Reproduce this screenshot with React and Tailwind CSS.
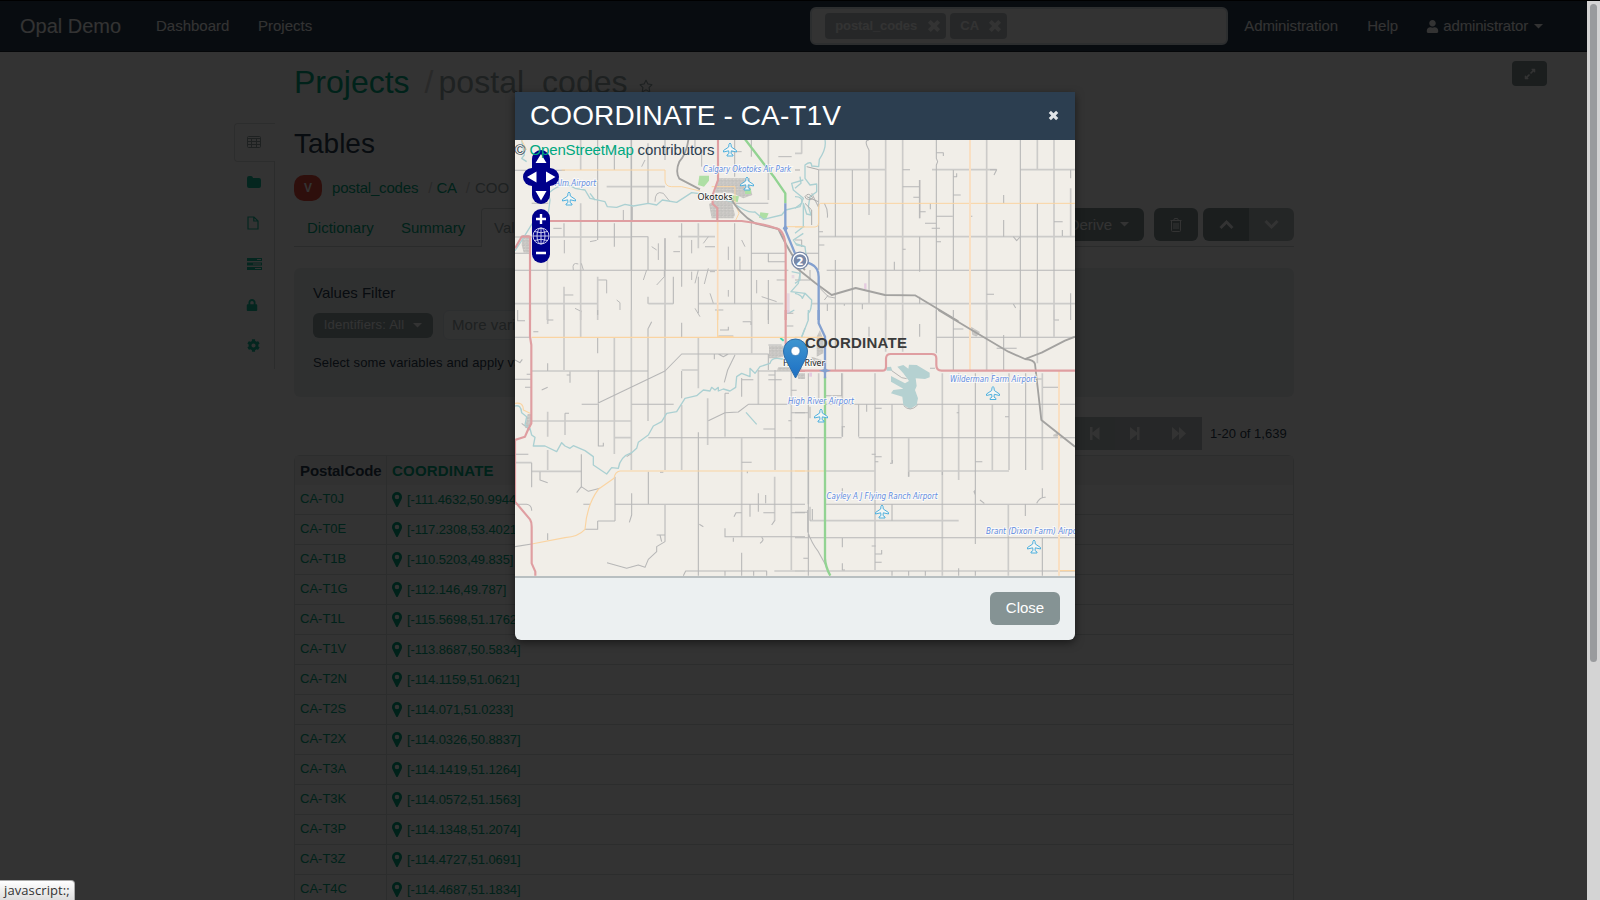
import React from "react";
import { FaLock, FaCog, FaUser, FaTimes, FaExpandAlt, FaRegStar, FaChevronUp, FaChevronDown } from "react-icons/fa";

const rows = [
  ["CA-T0J", "[-111.4632,50.9944]"],
  ["CA-T0E", "[-117.2308,53.4021]"],
  ["CA-T1B", "[-110.5203,49.835]"],
  ["CA-T1G", "[-112.146,49.787]"],
  ["CA-T1L", "[-115.5698,51.1762]"],
  ["CA-T1V", "[-113.8687,50.5834]"],
  ["CA-T2N", "[-114.1159,51.0621]"],
  ["CA-T2S", "[-114.071,51.0233]"],
  ["CA-T2X", "[-114.0326,50.8837]"],
  ["CA-T3A", "[-114.1419,51.1264]"],
  ["CA-T3K", "[-114.0572,51.1563]"],
  ["CA-T3P", "[-114.1348,51.2074]"],
  ["CA-T3Z", "[-114.4727,51.0691]"],
  ["CA-T4C", "[-114.4687,51.1834]"],
];

const Caret = ({ className = "" }) => (
  <svg className={`shrink-0 ${className}`} width="9" height="5" viewBox="0 0 9 5"><path d="M0 0H9L4.500 4.500Z" fill="currentColor" /></svg>
);

const PinIcon = () => (
  <svg width="10" height="15" viewBox="0 0 10 15" className="shrink-0">
    <path fillRule="evenodd" fill="currentColor" d="M5 0A5 5 0 0 0 0 5C0 6 .2 6.700 .5 7.300L4.100 14.400C4.500 15.100 5.500 15.100 5.900 14.400L9.500 7.300C9.800 6.700 10 6 10 5A5 5 0 0 0 5 0ZM5 2.700A2.300 2.300 0 1 1 5 7.300A2.300 2.300 0 0 1 5 2.700Z" />
  </svg>
);

const CrossIcon = ({ size }) => (
  <svg width={size} height={size} viewBox="0 0 12 12" className="shrink-0"><path d="M2 2L10 10M10 2L2 10" stroke="currentColor" strokeWidth="3.400" /></svg>
);

const TableIcon = () => (
  <svg width="14" height="12" viewBox="0 0 14 12" fill="none" stroke="currentColor">
    <rect x=".5" y=".5" width="13" height="11" rx="1" />
    <path d="M.5 2.500H13.500M.5 5.500H13.500M.5 8.500H13.500M4.500 2V12M9.500 2V12" />
  </svg>
);
const FolderIcon = () => (
  <svg width="14" height="12" viewBox="0 0 14 12"><path fill="currentColor" d="M0 2Q0 0 2 0H4Q5.800 0 6 2H12Q14 2 14 4V10Q14 12 12 12H2Q0 12 0 10Z" /></svg>
);
const FileIcon = () => (
  <svg width="12" height="14" viewBox="0 0 12 14" fill="none" stroke="currentColor" strokeWidth="1.2"><path d="M1 1H7L11 5V13H1ZM6.800 1V5H11" /></svg>
);
const TasksIcon = () => (
  <svg width="16" height="12" viewBox="0 0 16 12"><path fill="currentColor" fillRule="evenodd" d="M0 0H15V3H0ZM10 1V2H14V1ZM0 4.500H15V7.500H0ZM6 5.500V6.500H14V5.500ZM0 9H15V12H0ZM8 10V11H14V10Z" /></svg>
);
const TrashIcon = () => (
  <svg width="12" height="14" viewBox="0 0 12 14" fill="none" stroke="currentColor"><path d="M.5 2.500H11.500M3.500 2.500L4.500 .5H7.500L8.500 2.500M1.500 2.500V12.500Q1.500 13.500 2.500 13.500H9.500Q10.500 13.500 10.500 12.500V2.500M4 5V11M6 5V11M8 5V11" /></svg>
);

function Navbar() {
  return (
    <header className="flex h-[52px] items-center border-b border-[#1a242f] border-t border-t-black bg-[#2c3e50] text-[15px] leading-5 text-white">
      <span className="ml-5 w-[136px] text-xl leading-6">Opal Demo</span>
      <span className="w-[102px]">Dashboard</span>
      <span>Projects</span>
      <div className="ml-auto flex h-[38px] w-[418px] items-center gap-1 rounded-md border-2 border-[#dce4ec] bg-white pl-[13px] text-[13px] font-bold text-white">
        <span className="flex h-[26px] w-[121px] items-center justify-between rounded-sm bg-[#bdc3c7] pl-[10px] pr-[5px]">
          <span className="tracking-[-0.1px]">postal_codes</span><CrossIcon size={14} />
        </span>
        <span className="flex h-[26px] w-[57px] items-center justify-between rounded-sm bg-[#bdc3c7] pl-[10px] pr-[5px]">
          CA<CrossIcon size={14} />
        </span>
      </div>
      <span className="ml-4 w-[123px] tracking-[-0.1px]">Administration</span>
      <span className="w-[59px]">Help</span>
      <FaUser size={13} className="mr-1" />
      <span className="tracking-[-0.15px]">administrator</span>
      <Caret className="ml-[6px] mr-[44px]" />
    </header>
  );
}

function Sidebar() {
  return (
    <nav className="mt-[71px] flex h-[246px] w-[41px] flex-col text-[#18bc9c]">
      <div className="flex h-[39px] shrink-0 items-center rounded-l border border-r-0 border-[#dce0e0] pb-px pl-3 text-[#95a5a6]"><TableIcon /></div>
      <div className="-mt-px flex flex-1 flex-col border-r border-[#d5dadb] pl-[13px]">
        <div className="flex h-[41px] items-center"><FolderIcon /></div>
        <div className="flex h-[41px] items-center"><FileIcon /></div>
        <div className="flex h-[41px] items-center"><TasksIcon /></div>
        <div className="flex h-[41px] items-center"><FaLock size={12} className="-ml-px" /></div>
        <div className="flex h-[41px] items-center"><FaCog size={13} /></div>
      </div>
    </nav>
  );
}

function Main() {
  return (
    <main className="ml-[19px] w-[1000px] text-[15px] leading-5 text-[#2c3e50]">
      <h1 className="mt-[10px] flex h-10 items-center text-[32px] leading-10">
        <span className="text-[#00a880]">Projects</span>
        <span className="ml-[15px] text-[#ccc]">/</span>
        <span className="ml-[5px] tracking-[0.05px] text-[#95a5a6]">postal_codes</span>
        <FaRegStar size={14} className="ml-[11px] mt-2 text-[#95a5a6]" />
      </h1>
      <h2 className="mt-[22px] h-10 text-[28px] leading-10">Tables</h2>
      <div className="mt-[9px] flex h-[30px] items-center text-[#00a880]">
        <span className="flex h-[26px] w-7 items-center justify-center rounded-[10px] bg-[#e74c3c] text-[12px] font-bold text-white">V</span>
        <span className="ml-[10px] tracking-[-0.18px]">postal_codes</span>
        <span className="ml-[10px] text-[#ccc]">/</span>
        <span className="ml-1 tracking-[-0.2px]">CA</span>
        <span className="ml-[9px] text-[#ccc]">/</span>
        <span className="ml-[5px] w-[34px] overflow-hidden text-[#95a5a6]">COORDINATE</span>
      </div>
      <div className="mt-[5px] flex h-[39px] text-[#00a880]">
        <span className="w-[94px] border-b border-[#d0d6d8] pl-[13px] pt-[10px]">Dictionary</span>
        <span className="w-[93px] border-b border-[#d0d6d8] pl-[13px] pt-[10px]">Summary</span>
        <span className="w-[74px] rounded-t border border-b-0 border-[#d0d6d8] pl-3 pt-[9px] text-[#95a5a6]">Values</span>
        <div className="flex flex-1 items-start justify-end border-b border-[#d0d6d8] text-white">
          <span className="flex h-[33px] w-[96px] items-center justify-end rounded-md bg-[#859596] pr-[15px]">Derive<Caret className="ml-2" /></span>
          <span className="ml-[10px] flex h-[33px] w-11 items-center justify-center rounded-md bg-[#859596]"><TrashIcon /></span>
          <span className="ml-[5px] flex h-[33px] w-[46px] items-center justify-center rounded-l-md bg-[#859596]"><FaChevronUp size={15} stroke="currentColor" strokeWidth="24" /></span>
          <span className="flex h-[33px] w-[45px] items-center justify-center rounded-r-md bg-[#b6bfbf]"><FaChevronDown size={15} stroke="currentColor" strokeWidth="24" /></span>
        </div>
      </div>
      <section className="mt-[21px] h-[129px] rounded-md bg-[#ecf0f1] px-[19px] pt-[15px]">
        <div>Values Filter</div>
        <div className="mt-[7px] flex items-center">
          <span className="flex h-[25px] w-[120px] items-center justify-center gap-[9px] rounded-md bg-[#95a5a6] text-[13px] tracking-[0.2px] text-white">Identifiers: All<Caret /></span>
          <span className="ml-[10px] flex h-[30px] w-[220px] items-center rounded-md border border-[#dce4ec] bg-[#f5f7f7] pl-2 tracking-[0.1px] text-[#95a5a6]">More variables...</span>
        </div>
        <p className="mt-[13px] text-[13px] tracking-[0.12px]">Select some variables and apply values filters</p>
      </section>
      <div className="mt-5 flex h-[33px] items-center justify-end text-[13px]">
        <div className="flex h-[33px] w-[170px] items-center bg-[#b9c1c1] pl-[42px] text-white">
          <span className="flex h-full w-[41px] items-center justify-center"><svg width="10" height="13" viewBox="0 0 10 13"><path fill="currentColor" d="M0 0H2.500V5.500L9.500 0V13L2.500 7.500V13H0Z" /></svg></span>
          <span className="flex h-full w-[87px] items-center justify-between bg-[#bdc3c7] pl-[15px] pr-[16px]">
            <svg width="10" height="13" viewBox="0 0 10 13"><path fill="currentColor" d="M0 0L7 5.500V0H9.500V13H7V7.500L0 13Z" /></svg>
            <svg width="14" height="13" viewBox="0 0 14 13"><path fill="currentColor" d="M0 0L7 6V0L14 6.500L7 13V7L0 13Z" /></svg>
          </span>
        </div>
        <span className="w-[92px] pl-[8px]">1-20 of 1,639</span>
      </div>
      <div className="mt-[5px] rounded-t-md border border-[#dce0e0] text-[13px] text-[#00a880]">
        <div className="flex h-[29px] bg-[#f5f5f5] text-[15px] font-bold">
          <span className="w-[92px] border-r border-[#dce0e0] pl-[5px] pt-[5px] tracking-[-0.1px] text-[#2c3e50]">PostalCode</span>
          <span className="pl-[5px] pt-[5px] tracking-[0.2px]">COORDINATE</span>
        </div>
        {rows.map(([code, coord], i) => (
          <div key={code} className={i % 2 ? "flex h-[30px] border-b border-[#dce0e0]" : "flex h-[30px] border-b border-[#dce0e0] bg-[#fcfcfc]"}>
            <span className="w-[92px] border-r border-[#dce0e0] pl-[5px] pt-1">{code}</span>
            <span className="flex items-center pl-[5px]"><PinIcon /><span className="ml-[5px] tracking-[-0.1px]">{coord}</span></span>
          </div>
        ))}
      </div>
    </main>
  );
}

const Plane = ({ x, y }) => (
  <path transform={`translate(${x} ${y})`} fill="#f4f6f4" stroke="#4fb0de" strokeWidth="1" strokeLinejoin="round"
    d="M0 -6.500Q1.300 -6 1.300 -2.500L6.500 1V2.500L1.300 1.300L1 4L3 5.500V6.500H-3V5.500L-1 4L-1.300 1.300L-6.500 2.500V1L-1.300 -2.500Q-1.300 -6 0 -6.500Z" />
);

const Label = ({ x, y, w, children, dark }) => (
  <text x={x} y={y} textLength={w} lengthAdjust="spacingAndGlyphs" fontFamily={dark ? "'Noto Sans', sans-serif" : "'DejaVu Sans', sans-serif"} fontSize={dark ? 9.5 : 8}
    fontStyle={dark ? "normal" : "italic"} fill={dark ? "#222" : "#5f8be0"} stroke="#fff" strokeOpacity=".7" strokeWidth="2" paintOrder="stroke">{children}</text>
);

function MapView() {
  return (
    <svg width="560" height="436" viewBox="515 140 560 436" className="block">
      <defs>
        <linearGradient id="pin" x1="0" y1="0" x2="0" y2="1"><stop offset="0" stopColor="#3f96d0" /><stop offset="1" stopColor="#1c6fc4" /></linearGradient>
        <pattern id="town" width="11" height="10" patternUnits="userSpaceOnUse"><rect width="11" height="10" fill="#dedbd6" /><path d="M0 2H11M3 0V10M0 7L5 6L11 8M8 2V6" fill="none" stroke="#b9b8b6" strokeWidth="2.200" /></pattern>
      </defs>
      <rect x="515" y="140" width="560" height="436" fill="#f1eee8" />

      {/* north-west */}
      <g transform="translate(515 80) scale(.33333)" fill="none" strokeLinejoin="round">
        <path stroke="#cccbc9" strokeWidth="5" d="M97 470V720M147 620V720M197 180V270M197 370V720M349 180V570M450 475V720M550 430V505M248 590V720M760 180V360M0 671H248M400 671H475M550 671H805M275 320H450M0 471H350M490 470H600" />
        <path stroke="#b7b7b7" strokeWidth="3.200" d="M248 180V480M298 200V270M298 430V500M349 180V720M399 190V370M399 470V570M399 650V671M475 590V671M500 430V620M450 475V571M550 590V700M659 430V671M709 425V720M760 520V545H810M760 600V720M0 571H820M0 271H150M50 370H100M600 370H760M710 520H810M147 430V470M0 520H45M350 470H400M659 180V290M709 180V230M600 500H570M450 180V240" />
        <path stroke="#b5b5b5" strokeWidth="2.800" d="M115 445H140M148 480V520M225 485L245 481M175 570Q170 545 190 552M199 550L205 570M250 600H275V640M148 645H175M305 660L315 668V690M325 390V422M352 380V422M410 500L425 510M430 490V540M395 570L385 600M425 615L448 590V572M475 515H495M530 480V520M565 490L580 470M530 575V600M550 570L540 610M580 565L568 612M600 575H585M640 500V540M675 530V570M380 260L390 240M420 365Q420 330 445 340L465 365M585 640L595 670M680 480L690 500M725 600V640M740 650L785 665M180 685L200 695M540 685L555 710M600 690H625M640 650V630M540 180V210M560 210V260M785 600H810M790 230H830M640 215H680" />
        <path stroke="#e0c9dc" strokeWidth="8" d="M820 640V700M834 585V595" opacity=".6" />
        <path stroke="none" fill="url(#town)" d="M607 295H705V318L712 345L685 355L650 338H600ZM582 372L600 362H650L660 405L655 415H590ZM22 465H44V518H26L20 495Z" />
        <path stroke="none" fill="#aedfa4" d="M553 287H582V302L567 320L549 315ZM645 345L672 349L668 367L650 361ZM736 397L761 400L753 418L732 413ZM690 325H708V342H690Z" />
        <path stroke="#abd0d2" strokeWidth="4" d="M20 180L28 225L20 235L35 245M0 512L20 482L52 430L100 400L105 360L100 340Q145 300 180 325L210 330L225 355L270 365L277 380L305 382L330 373L355 378L400 370L425 375L442 360L485 367L530 338L570 343L650 365Q695 400 720 396L745 418L800 405L812 390L855 380L865 355L835 330L830 310L865 300M225 340L240 360M865 460L835 480L845 495L870 500M830 575L855 580L850 610L828 635L870 640M820 700L838 690" />
        <path stroke="#fad4a2" strokeWidth="3" d="M140 270H450V300Q450 320 470 320H500L555 333M590 320H660V370L672 400L660 425M815 440H870M20 180L35 210" />
        <path stroke="#f9dabb" strokeWidth="5" d="M608 425V720" />
        <path stroke="#a3a2a0" strokeWidth="5.500" d="M520 180Q515 220 493 245Q480 275 493 296L555 328M645 350Q670 400 720 430L790 447Q820 510 845 545L870 570" />
        <path stroke="#df9ea1" strokeWidth="6.500" d="M45 720V470H20L0 505M100 423H680Q750 432 790 447Q812 460 812 510V720M609 180V300L593 345V372L607 384V422" />
        <path stroke="#92d392" strokeWidth="7" d="M688 175L780 295L811 340V370" />
        <path stroke="#83a0cf" strokeWidth="7" d="M811 370V450L840 520L870 545" />
        <path fill="#83a0cf" d="M803 445L811 434L819 445L811 456Z" />
      </g>

      {/* north-east */}
      <g transform="translate(795 80) scale(.33333)" fill="none" strokeLinejoin="round">
        <path stroke="#cccbc9" strokeWidth="5" d="M222 210V405M272 180V720M323 180V720M575 180V720M727 180V270M777 180V720M827 325V470M71 269H272M411 269H605M676 269H840M71 470H840M50 671H840M20 180V220H0M222 570V670M374 300V415" />
        <path stroke="#b7b7b7" strokeWidth="3.200" d="M121 180V470M121 540V720M172 270V720M374 300V415M374 470V575M374 650V671M424 180V235L428 245L424 255V720M475 270V570M626 345V370M626 420V470M676 180V720M727 370V720M827 270V295M827 640V720M71 269V570M323 269H345M121 571H840M323 320H374M374 395H392M424 409H473M424 218H445V228M475 290H485V280M475 345H497M222 210Q205 180 222 180M406 370V388M390 430H424M410 445H435M424 485H438M298 545V570M585 269H605L597 285M655 470L665 482L675 471M727 540V577M777 425H803M802 450V468M575 643H597M655 672L662 684M202 672V688M97 672V693M88 370Q100 390 97 413M71 495H88M0 520H71M121 571H95M71 455H84M323 508H332M525 409H532M45 570V600H0M148 672V677M50 340L70 380M0 480H20V500M355 352H375" />
        <path stroke="#abd0d2" strokeWidth="4" d="M90 180Q95 205 73 238L71 260L50 258Q50 240 30 255L30 295L45 315L65 312L65 335L45 350L40 380L48 405L35 402L25 370V440L0 460M0 325L18 310L15 290M0 350Q25 350 20 370L0 385M0 490L30 500L35 540L15 560V600L0 610M0 640Q20 645 22 655L30 640L50 660Q50 690 40 700V720" />
        <path stroke="#aaa" strokeWidth="3" d="M30 350Q40 335 52 352Q52 362 40 358Q32 358 30 350M35 350L70 365M30 370L50 390V435M0 270H15M35 260L71 269" />
        <path stroke="#fad4a2" strokeWidth="3" d="M840 370H76Q71 372 71 385V430Q71 441 60 441H0" />
        <path stroke="#f9dfc2" strokeWidth="6" d="M525 180V720" />
        <path stroke="#a3a2a0" strokeWidth="5.500" d="M0 560L60 608L110 645L182 624L270 645L360 646L490 724" />
        <path stroke="#aaa" strokeWidth="2.500" d="M75 625L100 650L120 654M100 645L88 660" />
        <path stroke="#83a0cf" strokeWidth="7" d="M0 530L50 553Q71 563 71 590V720" />
        <path stroke="#e5cbe0" strokeWidth="7" d="M211 610V627" />
      </g>

      {/* south-west */}
      <g transform="translate(515 310) scale(.33333)" fill="none" strokeLinejoin="round">
        <path stroke="#cccbc9" strokeWidth="5" d="M147 0V180M197 0V82M349 0V480M450 0V480M98 0V42M298 82V432M500 180H550M500 285V480M50 333H350M300 383H350M98 305V380M98 420V480M150 375V310M300 500V633M450 585V695M578 265V405M730 180V283M780 180V480M829 180V780M50 484H200M710 0V130M630 250V380M680 385V680M550 82V235M0 458H50M779 500V633M778 783H870" />
        <path stroke="#b7b7b7" strokeWidth="3.200" d="M248 0V15M248 82V130M500 38V82M760 0V42M399 55V333M50 183H400M0 82H45M250 180V408H265V398M200 283H248M350 283H476M248 280L450 183L500 132H760V180M500 183V265M730 183H870M700 283H829M580 332L630 308L670 306L700 283M630 250H642M628 217L638 180L660 135M598 132V148M610 132L625 140L640 132M400 383H870M400 485V583M300 583H870M550 367V797M248 633H300M248 633V658H210M199 433V530L220 544L255 535M199 530L185 548M0 208H50M50 458V532M75 485V510L98 518M0 433H40M0 583H35Q50 585 50 602M205 583H225M98 160V183M98 670V690M680 204V260M680 209H715M760 209H800M829 241H845M745 357H780M680 457H710M820 332H829M829 308H870M760 105H800M705 583V620M730 550V605M752 555V580M829 608H870M745 608H779M657 620L663 608H680M630 655V680H870M680 797V728M505 797L512 783H755V797M630 783V797M716 783V797M779 632L770 645M425 675H450M276 758L335 775L370 765L390 772L400 748L425 725V710L450 695M435 675L440 695M0 710L50 702M343 637L350 615V550M8 0V32H30M98 30H115M55 65H70M80 240L98 232M165 185V218M165 195H155M150 310H162M400 55L410 35M683 35H708V45M615 60H640V50M610 78H655M553 643L565 650M735 700Q750 690 740 682M655 683V695M20 340L45 360M0 150L15 158L22 148M35 193H50M30 232H48M335 440L350 430M435 487H445M697 484V490M850 195L870 203M815 10H835M815 48H835M760 195H780" />
        <path stroke="none" fill="url(#town)" d="M762 107H805V140L780 145H762ZM790 172H860V182H785ZM845 190H870V207H850ZM38 312H48V345L30 355Z" />
        <path stroke="#e0c9dc" strokeWidth="8" d="M820 0V10" opacity=".6" />
        <path stroke="#40d6b0" strokeWidth="6" d="M796 84L806 92" />
        <path stroke="#abd0d2" strokeWidth="4" d="M0 288Q18 283 20 308L35 320L30 345L45 355L50 375L60 382L55 408H90L125 425L140 398L150 408L165 415L175 407L210 422L235 440V465L275 492L290 473L310 475Q315 440 350 428L365 415L370 397L400 375L415 348L440 335L455 310L485 305L510 265L545 257L565 240L585 243L590 232L600 240L610 232V243L625 237L645 243L662 232L665 200L680 190L705 200V175L720 190L735 170L765 160Q770 140 800 147L850 145M693 307L725 343M870 55L860 80" />
        <path stroke="#fad4a2" strokeWidth="3.500" d="M50 82H870M608 0V80H655M0 280Q25 275 25 300L45 310M870 483H315Q300 485 297 505L250 538Q215 585 210 658Q190 680 150 683L50 702" />
        <path stroke="#df9ea1" strokeWidth="6.500" d="M45 0V80L49 105V340Q40 355 30 380L0 390V575L45 628Q50 635 50 650V760L61 785V797M812 0V110M850 183H870" />
      </g>

      {/* south-east */}
      <g transform="translate(795 310) scale(.33333)" fill="none" strokeLinejoin="round">
        <path stroke="#cccbc9" strokeWidth="5" d="M272 0V125M323 0V125M442 190V797M291 283V458M341 385V500M592 283V480M592 190V210M491 283V510M491 190V210M642 190V480M575 0V180M777 0V80M727 0V160M240 190V780M71 190V280M742 190V480M640 585V797M45 632H491M0 783H840M142 190V380M40 383V583M90 483H240M341 483H642" />
        <path stroke="#b7b7b7" strokeWidth="3.200" d="M121 0V180M172 0V180M222 50V80M374 42V80M424 0V130M475 0V180M626 75V180M676 0V80M541 190V702M692 190V480M40 190V383M40 283V797M191 283V380M142 535V555M142 683V712M142 760V780H150M291 583V632M691 583V618M742 683V797M341 783V797M391 783V797M491 775V797M541 783V797M291 783V797M424 82H840M90 283H840M0 383H140M191 383H840M90 583H840M0 683H840M90 257H140V190M744 232H790M475 57H505M605 115H665M778 30H792M215 283V305M240 295H260M140 350H150M142 350V380M230 433H242M240 440H260M240 455H250M285 460H292V450M341 500V485M541 455H562M442 485V495M541 540L537 545L541 555M555 570L568 580M725 580Q735 560 752 562M742 535V565M230 708H242M240 732H260V720M240 757H260M45 590V632M52 597V630M38 600V665Q50 700 70 725L95 770M25 745H40M0 607H40M0 308H40M45 290V325M485 308H492M630 320H642M720 207H740M405 175H420M715 683H725" />
        <path stroke="none" fill="#b5d1d1" d="M274 172L288 170L292 182H275ZM307 170L325 165L340 176L342 164L365 165L404 188V202L390 207L362 205L365 228L360 240L369 265L365 285L345 297L325 285L322 260L288 250L295 240L325 236L288 215V198L330 220L342 213L325 190Z" />
        <path stroke="#aaa" strokeWidth="2.500" d="M290 182L320 203L335 206M326 287Q345 308 368 285" />
        <path stroke="none" fill="url(#town)" d="M528 50L555 66L545 80L532 75ZM775 374L792 366V380H775ZM50 140L80 150V172L50 160ZM65 80L75 60L85 90V130L65 140Z" />
        <path stroke="#fad4a2" strokeWidth="3.500" d="M0 82H85M0 483H88M792 782H840" />
        <path stroke="#f9dfc2" strokeWidth="6" d="M525 0V180M792 183V797" />
        <path stroke="#abd0d2" strokeWidth="4" d="M40 0V30L20 82" />
        <path stroke="#a3a2a0" strokeWidth="5.500" d="M430 0L530 60L640 125L690 147Q718 150 720 162L730 250L739 330L840 410M690 147L740 128L810 92L840 80" />
        <path stroke="#df9ea1" strokeWidth="6.500" d="M0 182H262Q273 182 273 170V145Q274 132 287 132H410Q424 132 424 145V165Q424 182 440 182H840" />
        <path stroke="#92d392" strokeWidth="7" d="M90 200V745Q91 770 106 797" />
        <path stroke="#83a0cf" strokeWidth="7" d="M71 0V40L90 80V205" />
        <path fill="#83a0cf" d="M72 182L86 178L90 164L94 178L108 182L94 186L90 200L86 186Z" />
        <path stroke="#e5cbe0" strokeWidth="8" d="M47 188V200" />
      </g>

      <Plane x={569} y={198.500} /><Plane x={730} y={149.500} /><Plane x={747} y={183.500} />
      <Plane x={821} y={415.500} /><Plane x={993} y={393} /><Plane x={882} y={511.500} /><Plane x={1034} y={546.500} />
      <Label x={555} y={186} w={41}>Alm Airport</Label>
      <Label x={703} y={171.500} w={88}>Calgary Okotoks Air Park</Label>
      <Label x={788} y={403.500} w={66}>High River Airport</Label>
      <Label x={950} y={381.500} w={86}>Wilderman Farm Airport</Label>
      <Label x={826.500} y={499} w={111}>Cayley A J Flying Ranch Airport</Label>
      <Label x={986} y={534} w={97}>Brant (Dixon Farm) Airport</Label>
      <Label dark x={697.500} y={200} w={35}>Okotoks</Label>
      <Label dark x={783} y={365.500} w={42}>High River</Label>

      <circle cx="800" cy="260.500" r="9" fill="#7788a8" />
      <circle cx="800" cy="260.500" r="7" fill="none" stroke="#fff" strokeWidth="1.300" />
      <text x="800" y="264.500" textAnchor="middle" fontFamily="'DejaVu Sans', sans-serif" fontWeight="bold" fontSize="10.500" fill="#fff">2</text>

      <path d="M795.500 378L785 358Q783.500 354.500 783.500 351A12 12 0 0 1 807.500 351Q807.500 354.500 806 358Z" fill="url(#pin)" stroke="#2d6da8" strokeWidth="1" />
      <circle cx="795.500" cy="351" r="4.500" fill="#fff" stroke="#2d6da8" strokeWidth=".6" />
      <text x="805" y="348" textLength="102" fontFamily="'Liberation Sans', sans-serif" fontWeight="bold" fontSize="15" fill="#3b3b3b">COORDINATE</text>

      <g fill="#00008b">
        <rect x="532" y="150" width="18" height="54" rx="9" />
        <rect x="523" y="168" width="36" height="18" rx="9" />
        <rect x="532" y="209" width="18" height="54" rx="9" />
      </g>
      <path fill="#fff" d="M541 154L546.500 163H535.500ZM541 200.500L546.500 191H535.500ZM527 177L536.500 171.500V182.500ZM555.500 177L546 171.500V182.500ZM536 217.800H539.800V214H542.200V217.800H546V220.200H542.200V224H539.800V220.200H536ZM536 251.800H546V254.200H536Z" />
      <g fill="none" stroke="#dcdcf5" strokeWidth=".9">
        <circle cx="541" cy="236" r="8" /><ellipse cx="541" cy="236" rx="4" ry="8" /><path d="M541 228V244M533 236H549M534.500 231.500Q541 234 547.500 231.500M534.500 240.500Q541 238 547.500 240.500" />
      </g>
      <text x="514.500" y="155" textLength="200" fontFamily="'Liberation Sans', sans-serif" fontSize="15" fill="#2c3e50">© <tspan fill="#00a880">OpenStreetMap</tspan> contributors</text>
    </svg>
  );
}

function Modal() {
  return (
    <div className="mt-[92px] ml-[515px] h-[548px] w-[560px] overflow-hidden rounded-b-md bg-[#ecf0f1] shadow-[0_3px_9px_rgba(0,0,0,0.5)]">
      <div className="flex h-12 items-center justify-between bg-[#2c3e50] pl-[15px] pr-4 text-white">
        <h3 className="pb-px text-[28px] leading-9 tracking-[0.1px]">COORDINATE - CA-T1V</h3>
        <span className="pb-[2px] text-[#dfe2e5]"><CrossIcon size={11} /></span>
      </div>
      <MapView />
      <div className="flex h-16 justify-end border-t-2 border-[#b8bfc1] pr-[15px] pt-[14px]">
        <button className="h-[33px] w-[70px] rounded-md bg-[#859394] pb-[2px] text-[15px] leading-5 text-white">Close</button>
      </div>
    </div>
  );
}

export default function App() {
  return (
    <div className="relative flex h-[900px] w-[1600px] overflow-hidden bg-white font-['Liberation_Sans',Arial,sans-serif]">
      <div className="h-[900px] w-[1587px] overflow-hidden">
        <Navbar />
        <div className="flex pl-[234px]">
          <Sidebar />
          <Main />
          <span className="ml-auto mr-10 mt-[9px] flex h-[25px] w-[35px] items-center justify-center rounded bg-[#859596] text-white"><FaExpandAlt size={12} /></span>
        </div>
      </div>
      <div className="w-[13px] border-t border-black bg-[#d4d4d4] px-[3px] pt-[3px]"><div className="h-[658px] rounded-full bg-[#999b9d]" /></div>
      <div className="absolute left-0 top-0 h-[900px] w-[1587px] bg-black/80"><div className="flex"><Modal /></div></div>
      <div className="absolute bottom-0 left-0 flex h-5 w-[75px] items-center rounded-tr border-r border-t border-[#aaa] bg-linear-to-b from-white to-[#dedede] pl-1 font-['Open_Sans',sans-serif] text-[13px] tracking-[0.1px] text-[#333]">javascript:;</div>
    </div>
  );
}
